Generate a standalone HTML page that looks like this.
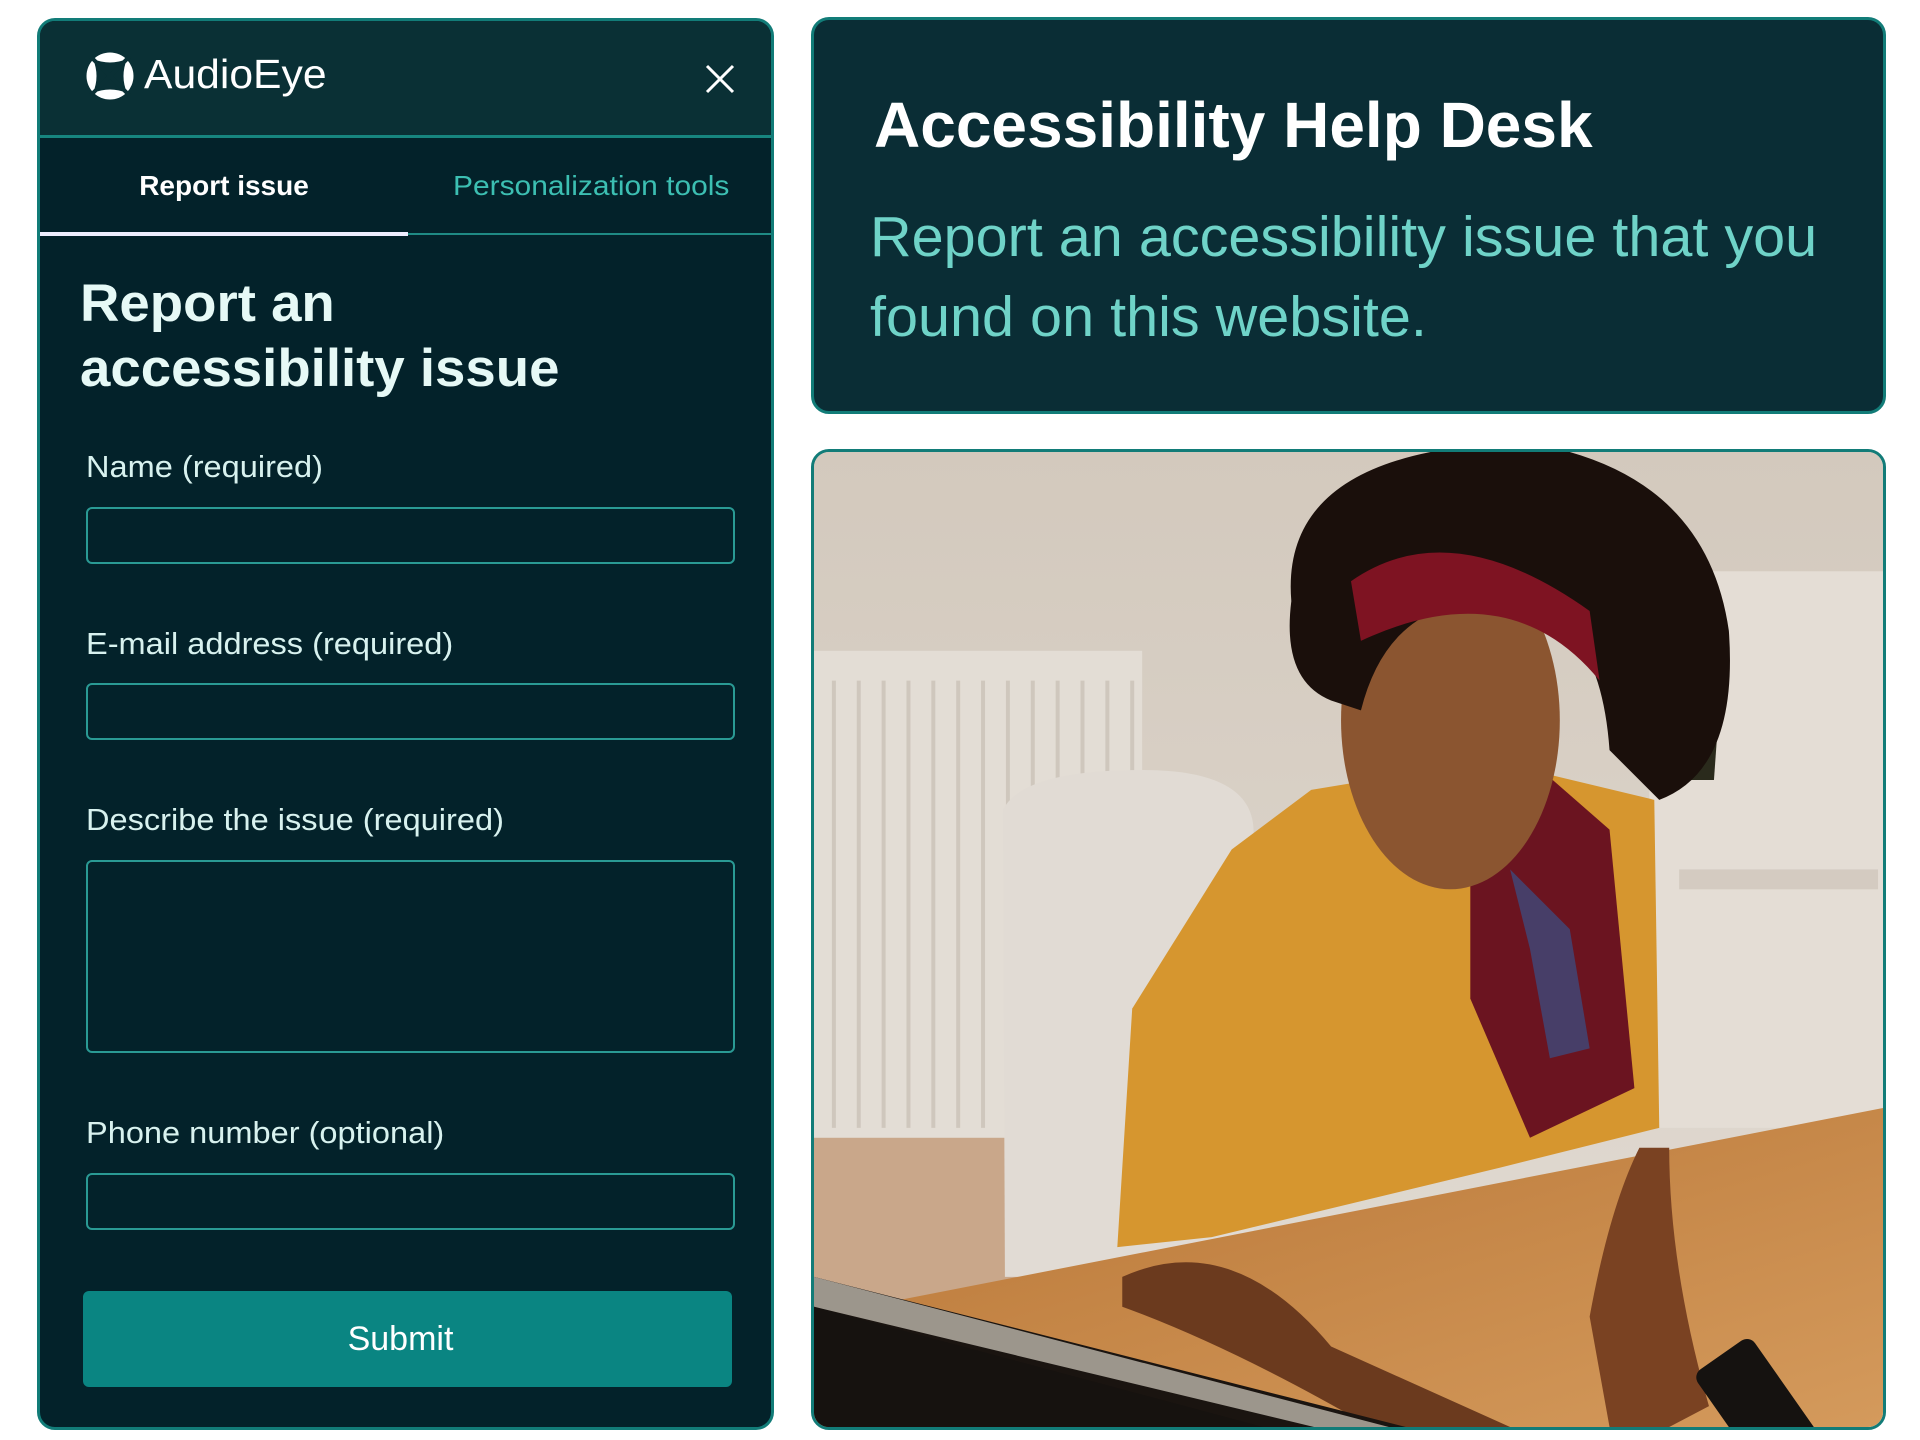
<!DOCTYPE html>
<html><head><meta charset="utf-8"><style>
*{margin:0;padding:0;box-sizing:border-box}
html,body{width:1920px;height:1440px;overflow:hidden}
body{background:#fff;position:relative;font-family:"Liberation Sans",sans-serif}
.a{position:absolute;white-space:nowrap}
.panel{position:absolute;left:37px;top:18px;width:737px;height:1412px;border:3px solid #127c78;border-radius:18px;background:#03222a;overflow:hidden}
.hdr{position:absolute;left:0;top:0;width:100%;height:117px;background:#0a3035;border-bottom:3px solid #17857f}
.lbl{position:absolute;left:46px;color:#d8f2ef;font-size:31px;transform-origin:left center;transform:scaleX(1.05)}
.inp{position:absolute;left:46px;width:649px;border:2px solid #2a9a94;border-radius:6px}
.sx{display:inline-block;transform-origin:left center}
</style></head><body>
<div class="panel">
  <div class="hdr">
    <svg class="a" style="left:45px;top:30px" width="50" height="50" viewBox="-25 -25 50 50">
      <circle r="23.5" fill="#fff"/>
      <path d="M-17,-17 Q0,-10 17,-17 Q10,0 17,17 Q0,10 -17,17 Q-10,0 -17,-17Z" fill="#0a3035"/>
      <path d="M-20,-20 L20,20 M20,-20 L-20,20" stroke="#0a3035" stroke-width="4"/>
    </svg>
    <div class="a" style="left:104px;top:30px;color:#fff;font-size:41px"><span class="sx" style="transform:scaleX(1.04)">AudioEye</span></div>
    <svg class="a" style="left:665px;top:43px" width="30" height="30" viewBox="0 0 30 30"><path d="M2,2 L28,28 M28,2 L2,28" stroke="#fff" stroke-width="3"/></svg>
  </div>
  <div class="a" style="left:0;top:120px;width:368px;text-align:center;line-height:90px;color:#fff;font-weight:bold;font-size:28px"><span class="sx" style="transform-origin:center">Report issue</span></div>
  <div class="a" style="left:368px;top:120px;width:366px;text-align:center;line-height:90px;color:#3cbfb2;font-size:28px"><span class="sx" style="transform:scaleX(1.07);transform-origin:center">Personalization tools</span></div>
  <div class="a" style="left:0;top:212px;width:734px;height:2px;background:#1f8a84"></div>
  <div class="a" style="left:0;top:211px;width:368px;height:4px;background:#eef"></div>
  <div class="a" style="left:40px;top:250px;color:#e6f9f6;font-size:53px;line-height:65px;font-weight:bold"><span class="sx" style="transform:scaleX(1.03)">Report an<br>accessibility issue</span></div>
  <div class="lbl" style="top:428px">Name (required)</div>
  <div class="inp" style="top:486px;height:57px"></div>
  <div class="lbl" style="top:605px">E-mail address (required)</div>
  <div class="inp" style="top:662px;height:57px"></div>
  <div class="lbl" style="top:781px">Describe the issue (required)</div>
  <div class="inp" style="top:839px;height:193px"></div>
  <div class="lbl" style="top:1094px">Phone number (optional)</div>
  <div class="inp" style="top:1152px;height:57px"></div>
  <div class="a" style="left:43px;top:1270px;width:649px;height:96px;background:#0a8582;border-radius:6px;color:#fff;font-size:34px;text-align:center;line-height:96px;padding-right:14px">Submit</div>
</div>

<div class="a" style="left:811px;top:17px;width:1075px;height:397px;background:#0a2d35;border:3px solid #127c78;border-radius:18px">
  <div class="a" style="left:60px;top:68px;color:#fff;font-size:64px;font-weight:bold"><span class="sx">Accessibility Help Desk</span></div>
  <div class="a" style="left:56px;top:177px;color:#6fd3c8;font-size:57px;line-height:80px"><span class="sx" style="transform:scaleX(1.01)">Report an accessibility issue that you<br>found on this website.</span></div>
</div>

<div class="a" style="left:811px;top:449px;width:1075px;height:981px;border:3px solid #127c78;border-radius:18px;overflow:hidden;background:#d6cdc1">
<svg width="1069" height="975" viewBox="0 0 1075 981" preserveAspectRatio="none" style="display:block">
  <defs>
    <linearGradient id="w" x1="0" y1="0" x2="0" y2="1"><stop offset="0" stop-color="#d3c9bd"/><stop offset="1" stop-color="#e2dcd4"/></linearGradient>
    <linearGradient id="d" x1="0" y1="0" x2="1" y2="1"><stop offset="0" stop-color="#b87535"/><stop offset="1" stop-color="#d49a5c"/></linearGradient>
  </defs>
  <rect width="1075" height="981" fill="url(#w)"/>
  <rect x="0" y="200" width="330" height="500" fill="#e3ddd5"/>
  <g stroke="#cfc7bd" stroke-width="4">
    <path d="M20,230V680M45,230V680M70,230V680M95,230V680M120,230V680M145,230V680M170,230V680M195,230V680M220,230V680M245,230V680M270,230V680M295,230V680M320,230V680"/>
  </g>
  <rect x="0" y="690" width="300" height="200" fill="#c9a78a"/>
  <rect x="840" y="120" width="235" height="560" fill="#e4ddd5"/>
  <rect x="870" y="420" width="200" height="20" fill="#d4cbc1"/>
  <path d="M870,260 q20,-40 40,0 l-5,70 h-30z" fill="#2a2a1c"/>
  <path d="M190,360 q20,-40 140,-40 q110,0 112,60 l0,450 l-250,0z" fill="#e1dbd4"/>
  <path d="M500,340 L560,330 L720,320 L845,350 L850,680 L690,720 L400,790 L305,800 L320,560 L420,400z" fill="#d6962f"/>
  <path d="M660,320 L720,310 L800,380 L825,640 L720,690 L660,550z" fill="#6b1420"/>
  <path d="M700,420 L760,480 L780,600 L740,610 L720,500z" fill="#2e5a9a" opacity=".6"/>
  <ellipse cx="640" cy="270" rx="110" ry="170" fill="#8b5530"/>
  <path d="M480,150 Q470,30 620,0 L760,0 Q900,40 920,180 Q930,320 850,350 L800,300 Q790,160 700,150 Q580,140 550,260 L520,250 Q470,230 480,150Z" fill="#1a0f0b"/>
  <path d="M540,130 Q640,60 780,160 L790,230 Q700,120 550,190z" fill="#7e1322"/>
  <path d="M0,870 L1075,660 L1075,981 L0,981Z" fill="url(#d)"/>
  <path d="M310,830 Q420,780 520,900 L700,981 L560,981 Q420,900 310,860Z" fill="#6b3a1e"/>
  <path d="M780,870 Q800,760 830,700 L860,700 Q860,820 900,960 L860,981 L800,981Z" fill="#7a4222"/>
  <path d="M0,830 L670,1000 L670,981 L0,981Z" fill="#1a1410"/>
  <path d="M0,830 L670,1005 L665,1020 L0,860Z" fill="#9c968c"/>
  <rect x="0" y="860" width="600" height="200" fill="#16120f" transform="rotate(15 0 860)"/>
  <rect x="920" y="895" width="70" height="150" rx="10" fill="#151210" transform="rotate(-35 955 970)"/>
</svg>
</div>
</body></html>
